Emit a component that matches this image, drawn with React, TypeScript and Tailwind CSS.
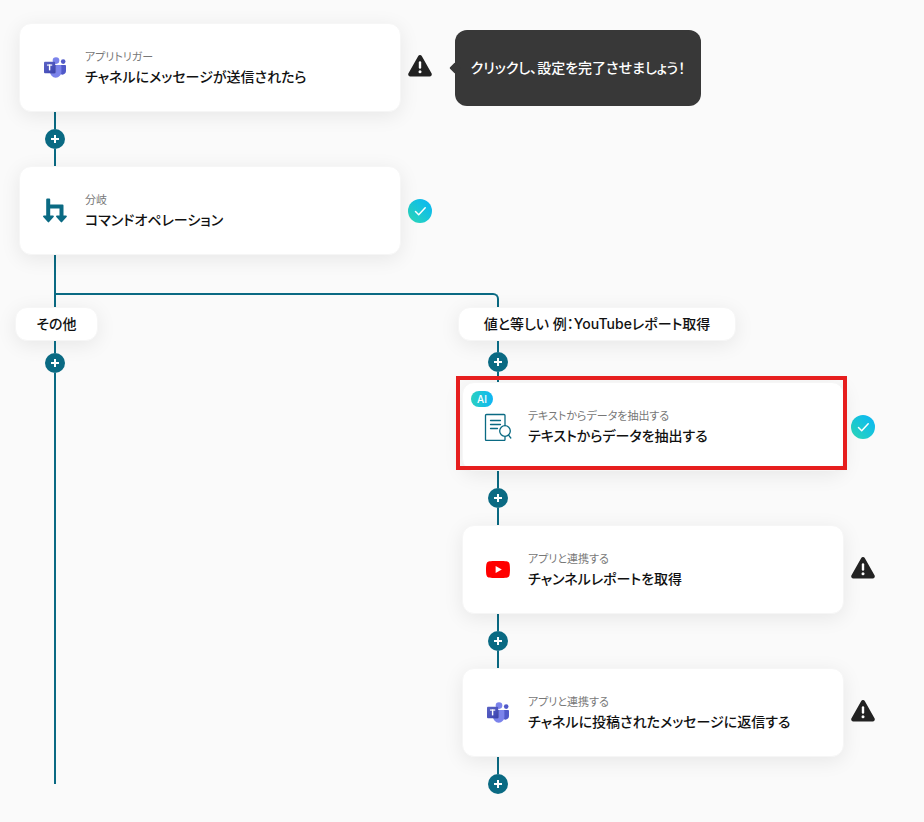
import type { ReactNode } from "react";

const TeamsIcon = () => (
  <svg viewBox="0 0 2229 2074" className="h-[21px] w-[22px]" aria-hidden="true">
    <defs>
      <linearGradient id="tile" x1="0" y1="0" x2="1" y2="1">
        <stop offset="0" stopColor="#5a62c3" />
        <stop offset="0.5" stopColor="#4d55bd" />
        <stop offset="1" stopColor="#3940ab" />
      </linearGradient>
    </defs>
    <path
      fill="#5059C9"
      d="M1555 777.500h575c54 0 98 44 98 98v525c0 200-162 362-362 362h-2c-200 0-362-162-362-362V829c0-28 24-51 53-51z"
    />
    <circle cx="1944" cy="441" r="233" fill="#5059C9" />
    <circle cx="1218" cy="337" r="337" fill="#7B83EB" />
    <path
      fill="#7B83EB"
      d="M1667 777H717c-54 2-96 46-95 100v598c-8 323 248 590 570 598 323-8 578-275 570-598V877c2-54-41-98-95-100z"
    />
    <path fill="#000" opacity="0.2" d="M622 777h600v720c0 80-60 150-140 150H650c-20-60-28-110-28-172z" />
    <rect x="0" y="466" width="1134" height="1141" rx="95" fill="url(#tile)" />
    <rect x="300" y="730" width="534" height="118" fill="#fff" />
    <rect x="495" y="730" width="144" height="600" fill="#fff" />
  </svg>
);

const BranchIcon = () => (
  <svg viewBox="0 0 24 25" className="h-[25px] w-6 fill-[#0a6a83]" aria-hidden="true">
    <path d="M3.200 1.500a1 1 0 0 1 1-1h2a1 1 0 0 1 1 1V6.500H19.500a1 1 0 0 1 1 1V17.500H23a.8.8 0 0 1 .6 1.400l-4.500 5.200a.9.900 0 0 1-1.300 0l-4.500-5.200a.8.8 0 0 1 .6-1.400h2.600V10.500H7.200v7h2.800a.8.8 0 0 1 .6 1.400l-4.500 5.200a.9.900 0 0 1-1.300 0L.3 18.900a.8.8 0 0 1 .6-1.400h2.300z" />
  </svg>
);

const ExtractIcon = () => (
  <svg viewBox="0 0 28 28" className="size-7 fill-none stroke-[#0a6a83]" strokeWidth="1.300" strokeLinecap="round" aria-hidden="true">
    <path d="M21 12.500V2.500a1 1 0 0 0-1-1H2.500a1 1 0 0 0-1 1v24a1 1 0 0 0 1 1H20a1 1 0 0 0 1-1V24" />
    <path d="M6.500 7.500h10M6.500 11.500h10M6.500 15.500h7" />
    <circle cx="21" cy="18" r="5.300" />
    <path d="M24.500 22.200l2.300 2.800" />
  </svg>
);

const YouTubeIcon = () => (
  <svg viewBox="0 0 24 17" className="h-[17px] w-6" aria-hidden="true">
    <path
      fill="#f00"
      d="M23.500 2.700A3 3 0 0 0 21.400.5C19.500 0 12 0 12 0S4.500 0 2.600.5A3 3 0 0 0 .5 2.700C0 4.600 0 8.500 0 8.500s0 3.900.5 5.800a3 3 0 0 0 2.100 2.200C4.500 17 12 17 12 17s7.500 0 9.400-.5a3 3 0 0 0 2.100-2.200c.5-1.900.5-5.800.5-5.800s0-3.900-.5-5.800z"
    />
    <path fill="#fff" d="M9.600 5.100v6.800l6.200-3.400z" />
  </svg>
);

const WarningIcon = () => (
  <svg viewBox="0 0 24 24" className="size-6 shrink-0 -translate-y-0.5" role="img" aria-label="未完了">
    <path fill="#222" d="M10.100 2.200a2.200 2.200 0 0 1 3.800 0l9.600 17a2.200 2.200 0 0 1-1.900 3.300H2.400a2.200 2.200 0 0 1-1.900-3.300z" />
    <path stroke="#fff" strokeWidth="2.400" strokeLinecap="round" d="M12 8.500v5" />
    <circle cx="12" cy="17.700" r="1.500" fill="#fff" />
  </svg>
);

const CheckIcon = () => (
  <span className="flex size-6 shrink-0 items-center justify-center rounded-full bg-linear-to-tr from-[#2fd8b4] to-[#0db3f7]">
    <svg viewBox="0 0 24 24" className="size-6 fill-none stroke-white" strokeWidth="1.500" strokeLinecap="round" strokeLinejoin="round" role="img" aria-label="完了">
      <path d="M7.500 12.500l3.200 3.200 6.500-7" />
    </svg>
  </span>
);

const Line = ({ className }: { className: string }) => <div className={`w-0.5 bg-[#0a6a83] ${className}`} />;

const AddButton = () => (
  <button type="button" aria-label="追加" className="flex size-5 shrink-0 items-center justify-center rounded-full bg-[#0a6a83]">
    <svg viewBox="0 0 8 8" className="size-2 stroke-white" strokeWidth="2" aria-hidden="true">
      <path d="M4 0v8M0 4h8" />
    </svg>
  </button>
);

const Connector = ({ className = "h-[54px]" }: { className?: string }) => (
  <div className={`ml-[30px] flex w-5 flex-col items-center ${className}`}>
    <Line className="grow" />
    <AddButton />
    <Line className="grow" />
  </div>
);

type StepProps = {
  icon: ReactNode;
  label: string;
  title: string;
  done?: boolean;
  ai?: boolean;
  selected?: boolean;
  children?: ReactNode;
};

const Step = ({ icon, label, title, done, ai, selected, children }: StepProps) => (
  <div className="ml-1 flex items-center gap-[7px]">
    <button
      type="button"
      className="relative flex h-[89px] w-[382px] shrink-0 items-center gap-4 rounded-xl border border-[#f6f6f6] bg-white pl-[21px] text-left shadow-[0_4px_20px_rgba(0,0,0,0.08)]"
    >
      <span className="flex w-7 justify-center">{icon}</span>
      <span className="flex flex-col gap-0.5">
        <span className="text-[11px] leading-4 text-[#777]">{label}</span>
        <span className="text-sm leading-5 font-medium text-[#111]">{title}</span>
      </span>
      {ai && (
        <span className="absolute top-2 left-2 flex h-4 w-[22px] items-center justify-center rounded-full bg-linear-to-r from-[#2bd0c0] to-[#10b5f4] text-[10px] leading-none font-medium text-white">
          AI
        </span>
      )}
      {selected && <span className="absolute -top-[7px] -right-1 bottom-0 -left-[7px] border-4 border-[#e61e1e]" />}
    </button>
    {done ? <CheckIcon /> : <WarningIcon />}
    {children}
  </div>
);

const BranchLabel = ({ className, children }: { className: string; children: ReactNode }) => (
  <button
    type="button"
    className={`h-[34px] shrink-0 self-start rounded-xl border border-[#f6f6f6] bg-white px-5 text-sm leading-5 font-medium whitespace-nowrap text-[#111] shadow-[0_4px_20px_rgba(0,0,0,0.08)] ${className}`}
  >
    {children}
  </button>
);

export default function App() {
  return (
    <main className="min-h-screen bg-[#fafafa] pt-[23px] pb-7 pl-[15px] font-['Inter','Noto_Sans_CJK_JP',sans-serif] text-[#222] [font-feature-settings:'palt']">
      <Step icon={<TeamsIcon />} label="アプリトリガー" title="チャネルにメッセージが送信されたら">
        <div role="tooltip" className="relative ml-4 flex h-[76px] min-w-[246px] items-center justify-center rounded-xl bg-[#383838] px-3 text-sm leading-5 font-medium whitespace-nowrap text-white">
          <span className="absolute top-[34px] -left-1 size-2 rotate-45 rounded-[1px] bg-[#383838]" />
          <span className="relative">クリックし、設定を完了させましょう！</span>
        </div>
      </Step>
      <Connector />
      <Step icon={<BranchIcon />} label="分岐" title="コマンドオペレーション" done />

      <div className="ml-[39px] h-[52px] border-l-2 border-[#0a6a83] pt-[38px]">
        <div className="h-3.5 w-[443px] rounded-tr-md border-t-2 border-r-2 border-[#0a6a83]" />
      </div>

      <div className="flex">
        <section className="flex w-[443px] shrink-0 flex-col pb-2.5">
          <BranchLabel className="min-w-[83px]">その他</BranchLabel>
          <div className="ml-[30px] flex w-5 grow flex-col items-center">
            <Line className="h-3" />
            <AddButton />
            <Line className="grow" />
          </div>
        </section>

        <section className="flex flex-col">
          <BranchLabel className="min-w-[278px]">値と等しい 例：YouTubeレポート取得</BranchLabel>
          <Connector className="h-[41px]" />
          <Step icon={<ExtractIcon />} label="テキストからデータを抽出する" title="テキストからデータを抽出する" done ai selected />
          <Connector />
          <Step icon={<YouTubeIcon />} label="アプリと連携する" title="チャンネルレポートを取得" />
          <Connector />
          <Step icon={<TeamsIcon />} label="アプリと連携する" title="チャネルに投稿されたメッセージに返信する" />
          <div className="ml-[30px] flex w-5 flex-col items-center">
            <Line className="h-[17px]" />
            <AddButton />
          </div>
        </section>
      </div>
    </main>
  );
}
